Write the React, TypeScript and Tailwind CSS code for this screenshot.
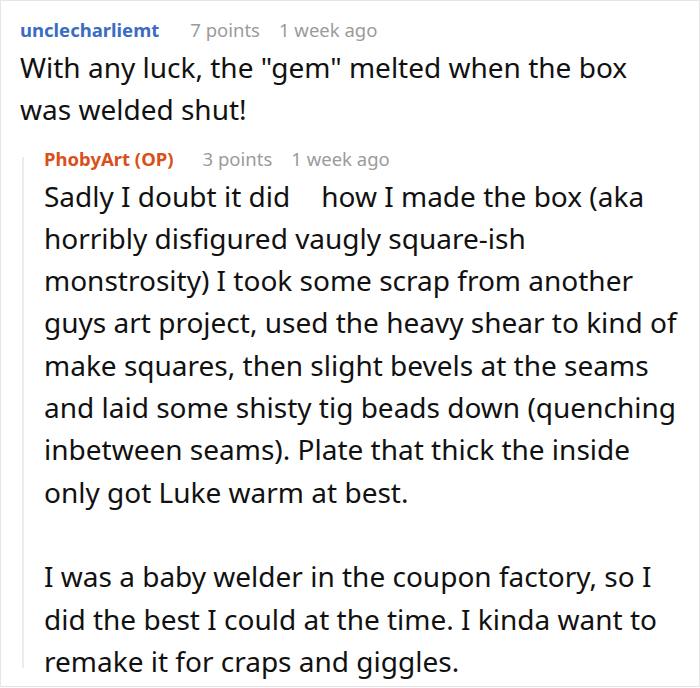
export default function App() {
  return (
    <div className="w-[700px] h-[688px] bg-white overflow-hidden" style={{ fontFamily: '"Noto Sans", "Open Sans", sans-serif' }}>
      <div className="w-[700px] h-[687px] overflow-hidden border border-[#e6e6e6] pl-[19px] pr-[10px] pt-[11px]">
        {/* Parent comment */}
        <div className="flex items-baseline text-[18.5px] leading-[36px] whitespace-nowrap">
          <span className="font-bold text-[#3b6cc4]">unclecharliemt</span>
          <span className="text-[#9b9b9b] ml-[31px]">7 points</span>
          <span className="text-[#9b9b9b] ml-[19px]">1 week ago</span>
        </div>
        <p className="text-[28px] leading-[42.3px] text-[#111] -mt-[2px]">
          With any luck, the "gem" melted when the box
          <br />
          was welded shut!
        </p>

        {/* Reply */}
        <div className="flex mt-[10px]">
          <div className="w-[2px] bg-[#ececec] ml-[2px] mt-[16px] mb-[14px] shrink-0" />
          <div className="pl-[20px] flex-1 whitespace-nowrap">
            <div className="flex items-baseline text-[18.5px] leading-[36px]">
              <span className="font-bold text-[#d9501b]">PhobyArt (OP)</span>
              <span className="text-[#9b9b9b] ml-[29px]">3 points</span>
              <span className="text-[#9b9b9b] ml-[19px]">1 week ago</span>
            </div>
            <div className="text-[28px] leading-[42.3px] text-[#111] -mt-[2px]">
              <p>
                Sadly I doubt it did<span className="inline-block w-[31px]" />how I made the box (aka
                <br />
                horribly disfigured vaugly square-ish
                <br />
                monstrosity) I took some scrap from another
                <br />
                guys art project, used the heavy shear to kind of
                <br />
                make squares, then slight bevels at the seams
                <br />
                and laid some shisty tig beads down (quenching
                <br />
                inbetween seams). Plate that thick the inside
                <br />
                only got Luke warm at best.
              </p>
              <p className="mt-[42.3px]">
                I was a baby welder in the coupon factory, so I
                <br />
                did the best I could at the time. I kinda want to
                <br />
                remake it for craps and giggles.
              </p>
            </div>
          </div>
        </div>
      </div>
    </div>
  );
}
